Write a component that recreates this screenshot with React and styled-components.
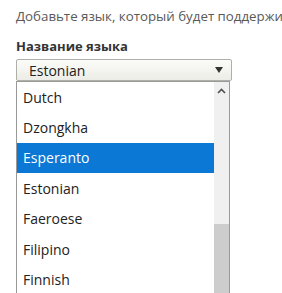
import React from "react";
import styled, { createGlobalStyle } from "styled-components";

const Global = createGlobalStyle`
  html, body { margin: 0; padding: 0; background: #fff; }
  body { font-family: "Open Sans", "Noto Sans", sans-serif; overflow: hidden; }
`;

const Page = styled.div`
  width: 282px;
  height: 293px;
  overflow: hidden;
  padding: 7px 0 0 16px;
  box-sizing: border-box;
`;

const Intro = styled.p`
  margin: 0;
  font-size: 13.3px;
  line-height: 18px;
  color: #595959;
  white-space: nowrap;
`;

const Label = styled.div`
  margin-top: 12px;
  font-size: 13px;
  line-height: 18px;
  font-weight: 700;
  color: #333;
`;

const Field = styled.div`
  width: 216px;
  margin-top: 4px;
`;

const Select = styled.div`
  height: 22px;
  box-sizing: border-box;
  border: 1px solid #b0b0ab;
  border-radius: 2px;
  background: linear-gradient(#fbfbf9, #ededE7);
  display: flex;
  align-items: center;
  justify-content: space-between;
  padding: 0 8px 0 12px;
  font-size: 14px;
  color: #222;
`;

const Caret = styled.span`
  width: 0;
  height: 0;
  border-left: 4px solid transparent;
  border-right: 4px solid transparent;
  border-top: 6px solid #333;
`;

const List = styled.div`
  display: flex;
  width: 214px;
  box-sizing: border-box;
  border: 1px solid #999;
  border-bottom: none;
  background: #fff;
`;

const Options = styled.div`
  flex: 1;
  display: flex;
  flex-direction: column;
`;

const Option = styled.div`
  height: 30.4px;
  display: flex;
  align-items: center;
  padding-left: 6px;
  font-size: 14px;
  color: ${(p) => (p.$active ? "#fff" : "#222")};
  background: ${(p) => (p.$active ? "#0a78d4" : "transparent")};
`;

const Scrollbar = styled.div`
  width: 15px;
  background: #f0f0f0;
  display: flex;
  flex-direction: column;
  align-items: center;
`;

const UpArrow = styled.svg`
  margin-top: 6px;
  flex: none;
`;

const Thumb = styled.div`
  margin-top: auto;
  width: 15px;
  height: 71px;
  flex: none;
  background: #cdcdcd;
`;

const items = ["Dutch", "Dzongkha", "Esperanto", "Estonian", "Faeroese", "Filipino", "Finnish"];

export default function App() {
  return (
    <Page>
      <Global />
      <Intro>Добавьте язык, который будет поддерживаться сайтом.</Intro>
      <Label>Название языка</Label>
      <Field>
        <Select>
          <span>Estonian</span>
          <Caret />
        </Select>
      </Field>
      <List>
        <Options>
          {items.map((it) => (
            <Option key={it} $active={it === "Esperanto"}>{it}</Option>
          ))}
        </Options>
        <Scrollbar>
          <UpArrow width="9" height="6" viewBox="0 0 9 6">
            <path d="M1 5 L4.5 1.5 L8 5" fill="none" stroke="#505050" strokeWidth="1.6" />
          </UpArrow>
          <Thumb />
        </Scrollbar>
      </List>
    </Page>
  );
}
